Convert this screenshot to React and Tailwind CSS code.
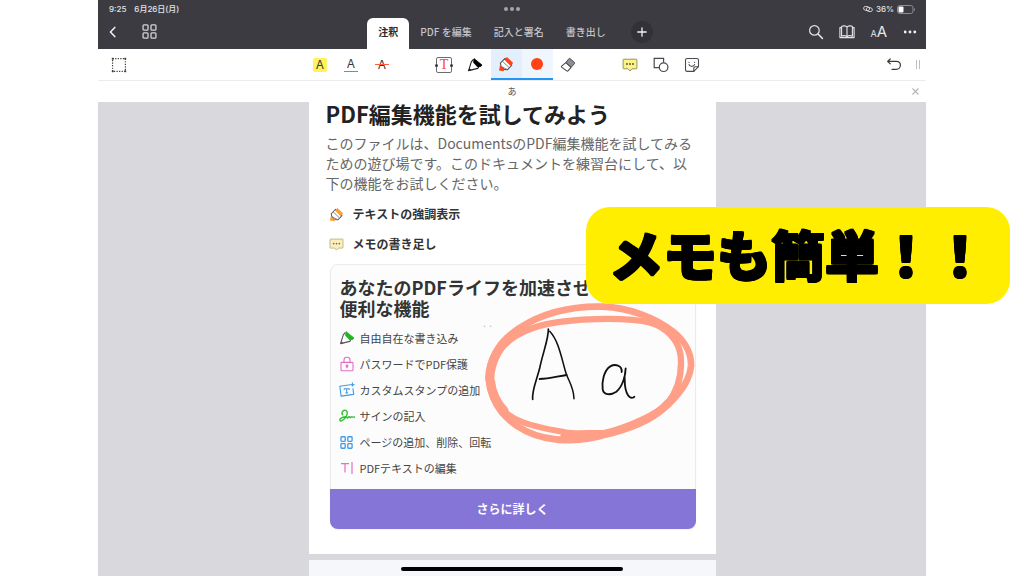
import { useState } from "react";

const TABS = ["注釈", "PDF を編集", "記入と署名", "書き出し"];

/* ---------- status bar + header icons ---------- */

function BackIcon() {
  return (
    <svg width="14" height="14" viewBox="0 0 14 14" fill="none" stroke="#f2f2f4" strokeWidth="1.5" strokeLinecap="round" strokeLinejoin="round">
      <path d="M8.8 2.4 4.4 7l4.4 4.6" />
    </svg>
  );
}

function GridIcon({ size, color, strokeWidth = 1.2 }) {
  return (
    <svg width={size} height={size} viewBox="0 0 14 14" fill="none" stroke={color} strokeWidth={strokeWidth}>
      <rect x="1" y="0.8" width="4.6" height="4.9" rx="0.8" />
      <rect x="8.4" y="0.8" width="4.6" height="4.9" rx="0.8" />
      <rect x="1" y="8.3" width="4.6" height="4.9" rx="0.8" />
      <rect x="8.4" y="8.3" width="4.6" height="4.9" rx="0.8" />
    </svg>
  );
}

function PlusIcon() {
  return (
    <svg width="10" height="10" viewBox="0 0 10 10" stroke="#f2f2f4" strokeWidth="1.3" strokeLinecap="round">
      <path d="M5 0.8v8.4M0.8 5h8.4" />
    </svg>
  );
}

function SearchIcon() {
  return (
    <svg width="16" height="16" viewBox="0 0 16 16" fill="none" stroke="#e4e4e7" strokeWidth="1.2" strokeLinecap="round">
      <circle cx="6.4" cy="6.4" r="4.8" />
      <path d="m10 10 4.4 4.4" strokeWidth="1.5" />
    </svg>
  );
}

function BookIcon() {
  return (
    <svg width="16" height="16" viewBox="0 0 16 16" fill="none" stroke="#e4e4e7" strokeWidth="1.1" strokeLinejoin="round">
      <path d="M8 3.2C6.8 1.6 4 1.5 2.6 2.4v9.8c1.6-.7 4.2-.6 5.4.6 1.2-1.2 3.8-1.3 5.4-.6V2.4C12 1.5 9.2 1.6 8 3.2Zm0 0v9.6" />
      <path d="M2.6 3.6H.9v10h14.2v-10h-1.7" />
    </svg>
  );
}

function MoreIcon() {
  return (
    <svg width="16" height="16" viewBox="0 0 16 16" fill="#f2f2f4">
      <circle cx="3.2" cy="8" r="1.4" />
      <circle cx="8" cy="8" r="1.4" />
      <circle cx="12.8" cy="8" r="1.4" />
    </svg>
  );
}

function HotspotIcon() {
  return (
    <svg width="10" height="8" viewBox="0 0 10 8" fill="none" stroke="#d4d4d8" strokeWidth="0.9">
      <rect x="0.6" y="1.6" width="6" height="3.8" rx="1.9" transform="rotate(12 3.6 3.5)" />
      <rect x="3.4" y="2.6" width="6" height="3.8" rx="1.9" transform="rotate(12 6.4 4.5)" />
    </svg>
  );
}

function BatteryIcon() {
  return (
    <svg width="18" height="9" viewBox="0 0 18 9">
      <rect x="0.5" y="0.5" width="15.5" height="8" rx="2.3" fill="none" stroke="#8f8e94" />
      <rect x="1.5" y="1.5" width="5" height="6" rx="1.1" fill="#fff" />
      <path d="M17 3v3c.6-.2.9-.8.9-1.5S17.6 3.2 17 3Z" fill="#8f8e94" />
    </svg>
  );
}

/* ---------- toolbar icons ---------- */

function SelectIcon() {
  return (
    <svg width="16" height="16" viewBox="0 0 16 16" fill="none" stroke="#3a3a3c" strokeWidth="1.2">
      <rect x="1.6" y="1.6" width="12.8" height="12.8" strokeDasharray="1.2 1.36" />
      <g fill="#3a3a3c" stroke="none">
        <rect x="0.8" y="0.8" width="1.8" height="1.8" />
        <rect x="13.4" y="0.8" width="1.8" height="1.8" />
        <rect x="0.8" y="13.4" width="1.8" height="1.8" />
        <rect x="13.4" y="13.4" width="1.8" height="1.8" />
      </g>
    </svg>
  );
}

function HighlighterIcon({ size = 16, color }) {
  return (
    <svg width={size} height={size} viewBox="0 0 16 16" strokeLinejoin="round" strokeLinecap="round">
      <path d="M7 2.4 2.4 7.2l.6 3.2 3.2 3 3.4.2 4.2-4.4Z" fill="#fff" stroke="#55555a" strokeWidth="1.1" />
      <path d="M9 1 15.2 7 12.4 9.800 6.400 3.800Z" fill={color} />
      <path d="m4.800 5.600 6 5.600M3 10.200 9 13.400" stroke="#77777c" strokeWidth="0.9" />
      <path d="M2 9.600 6.600 13.800 5.200 15.200 1 14.400Z" fill={color} />
    </svg>
  );
}

function PenIcon({ size = 16, stroke, fill }) {
  return (
    <svg width={size} height={size} viewBox="0 0 16 16" strokeLinejoin="round">
      <path d="M6.4 2.4 4.3 4.8 1.6 13.6l9.2-2.2 1.2-2.3" fill="#fff" stroke={stroke} strokeWidth="1.1" />
      <path d="M7 1.6 15 8l-1.2 1.4-3.2.5-4-4.3Z" fill={fill} stroke={fill} strokeWidth="0.8" />
      <path d="m1.4 13.9.9-3 2.3 2.3Z" fill={stroke} />
    </svg>
  );
}

function EraserIcon() {
  return (
    <svg width="16" height="16" viewBox="0 0 16 16" strokeLinejoin="round">
      <path d="m10 1.600 4.300 3.700c.5.4.5.900.1 1.400L11 10.400 5.800 5.600l3.100-3.900c.3-.4.700-.4 1.100-.1Z" fill="#8e8e93" stroke="#4a4a4e" strokeWidth="1" />
      <path d="m5.800 5.600 5.200 4.800-3 3.400c-.4.4-.8.400-1.300.1L1.900 10.400c-.5-.4-.6-.9-.2-1.300Z" fill="#fff" stroke="#4a4a4e" strokeWidth="1.1" />
    </svg>
  );
}

function NoteIcon({ size = 16, fill, stroke, dots }) {
  return (
    <svg width={size} height={size} viewBox="0 0 16 16" strokeLinejoin="round">
      <path d="M1.6 2.2h12.800c.3 0 .5.2.5.5v8.600c0 .3-.2.500-.5.500H10L8 14l-2-2.200H1.600c-.3 0-.5-.2-.5-.5V2.700c0-.3.200-.5.500-.5Z" fill={fill} stroke={stroke} strokeWidth="1" />
      <g fill={dots}>
        <circle cx="5" cy="7" r="0.9" />
        <circle cx="8" cy="7" r="0.9" />
        <circle cx="11" cy="7" r="0.9" />
      </g>
    </svg>
  );
}

function ShapesIcon() {
  return (
    <svg width="16" height="16" viewBox="0 0 16 16" fill="none" stroke="#4a4a4e" strokeWidth="1.2">
      <path d="M6 10.6H1.2V1.4h9.4v4" />
      <circle cx="10.6" cy="10.2" r="4.3" />
    </svg>
  );
}

function StickerIcon() {
  return (
    <svg width="16" height="16" viewBox="0 0 16 16" fill="none" stroke="#4a4a4e" strokeWidth="1.1" strokeLinejoin="round" strokeLinecap="round">
      <path d="M9.8 14.4H3.2c-1 0-1.700-.7-1.700-1.700V3.200c0-1 .7-1.700 1.700-1.700h9.600c1 0 1.700.7 1.700 1.700v6.500Z" />
      <path d="M9.8 14.4V11c0-.8.5-1.300 1.300-1.300h3.400" />
      <path d="M5 7.600c.6 2.200 4.600 2.400 5.600 0M5 5.200v.3M10.600 5.200v.3" />
    </svg>
  );
}

function UndoIcon() {
  return (
    <svg width="16" height="16" viewBox="0 0 16 16" fill="none" stroke="#3a3a3c" strokeWidth="1.2" strokeLinecap="round" strokeLinejoin="round">
      <path d="M4.200 2 1.600 4.400l2.600 2.400M1.800 4.400h8.400c2.500 0 4.200 1.700 4.200 3.900s-1.700 4.100-4.200 4.100H6" />
    </svg>
  );
}

function MarkedLetter({ kind }) {
  if (kind === "highlight") {
    return <span className="flex h-[14px] w-[14px] items-center justify-center rounded-xs bg-[#fff35c]">A</span>;
  }
  if (kind === "underline") {
    return <span className="flex h-[14px] w-[14px] items-center justify-center border-b border-[#ff5a3c]">A</span>;
  }
  return (
    <span className="relative flex h-[14px] w-[14px] items-center justify-center">
      A
      <span className="absolute inset-x-0 top-[6px] h-px bg-[#ff5a3c]" />
    </span>
  );
}

function TextBoxIcon() {
  return (
    <span className="relative flex h-4 w-4 items-center justify-center rounded-xs border border-[#6b6b70] font-['Liberation_Serif',serif] text-[14px] leading-none text-[#ff4a22]">
      T
      <span className="absolute top-[6px] -left-[2px] h-[3px] w-[3px] rounded-full bg-[#3a3a3c]" />
      <span className="absolute top-[6px] -right-[2px] h-[3px] w-[3px] rounded-full bg-[#3a3a3c]" />
    </span>
  );
}

function ToolButton({ label, className = "", children }) {
  return (
    <button
      type="button"
      aria-label={label}
      className={`flex h-[31px] w-[31px] flex-shrink-0 items-center justify-center text-[12px] leading-none text-[#3a3a3c] ${className}`}
    >
      {children}
    </button>
  );
}

/* ---------- feature list icons ---------- */

function LockIcon() {
  return (
    <svg width="14" height="16" viewBox="0 0 14 16" fill="none" stroke="#e36fc8" strokeWidth="1.1">
      <rect x="1" y="6.4" width="12" height="8.4" rx="0.8" />
      <path d="M4 6.4V4c0-3.600 6-3.600 6 0v2.400" />
      <circle cx="7" cy="10" r="0.9" fill="#e36fc8" />
      <path d="M7 10v2.2" />
    </svg>
  );
}

function StampIcon() {
  return (
    <svg width="16" height="16" viewBox="0 0 16 16" fill="none" stroke="#3d9be9" strokeWidth="1.1" strokeLinejoin="round">
      <path d="M11 2.700.8 4.200l1.300 9.900 12.600-1.700-.8-6.200" />
      <path d="M5.200 6.700h5v1.200M5.200 6.700v1.200M7.700 6.700v4.200M6.500 10.900h2.400" />
      <path d="M13.400.6v4M11.400 2.600h4" />
    </svg>
  );
}

function SignIcon() {
  return (
    <svg width="16" height="14" viewBox="0 0 16 14" fill="none" stroke="#2fc22f" strokeWidth="1.4" strokeLinecap="round" strokeLinejoin="round">
      <path d="M3.600 5.800C1.800 3.600 4.400.4 7 1.600c2.600 1.400.8 5.800-1.600 8.200-1.800 1.900-4.400 3-4.600 1.400C.6 9.600 4 8.200 6.600 7.800c1.600-.2 1 1.400 1.800 1.200.8-.2 1-1.600 1.800-1.400.6.200.4 1.200 1.200 1 .8-.2.800-1 1.400-.8.600.200 1.200.6 2.600.2" />
    </svg>
  );
}

function TextCursorIcon() {
  return (
    <svg width="14" height="14" viewBox="0 0 14 14" fill="none" stroke="#e36fc8" strokeWidth="1.2">
      <path d="M1 2.600h8M5 2.600v9M12 1v12" />
    </svg>
  );
}

const FEATURES = [
  { text: "自由自在な書き込み", icon: <PenIcon stroke="#55555a" fill="#22b422" /> },
  { text: "パスワードでPDF保護", icon: <LockIcon /> },
  { text: "カスタムスタンプの追加", icon: <StampIcon /> },
  { text: "サインの記入", icon: <SignIcon /> },
  { text: "ページの追加、削除、回転", icon: <GridIcon size={13} color="#3d9be9" strokeWidth={1.4} /> },
  { text: "PDFテキストの編集", icon: <TextCursorIcon /> },
];

// Freehand circle and "Aa" written over the card
function Handwriting() {
  return (
    <svg
      className="pointer-events-none absolute top-8 left-[148px]"
      width="220"
      height="150"
      viewBox="30 18 660 450"
      fill="none"
      strokeLinecap="round"
      strokeLinejoin="round"
    >
      <g stroke="#ff9f88">
        <path
          d="M60 265C60 200 95 150 150 112C220 66 310 45 400 47C480 50 560 80 612 122C645 148 668 185 666 225C662 265 640 295 612 326C570 376 500 398 420 428C370 444 310 451 260 445C170 436 100 385 75 325C66 303 60 288 60 265Z"
          strokeWidth="20"
        />
        <path
          d="M60 262C62 215 92 165 140 135C200 100 260 92 340 86C420 82 500 84 545 95C595 110 630 150 635 195C640 250 625 300 595 338C565 368 480 410 400 428"
          strokeWidth="19"
        />
        <path d="M62 262C64 208 92 160 130 132M64 270C68 310 82 335 105 360" strokeWidth="28" />
        <path d="M78 330C120 395 200 408 290 424C320 430 370 424 400 426" strokeWidth="18" />
        <path d="M286 437C330 434 370 438 430 424C500 405 560 380 598 335" strokeWidth="24" />
      </g>
      <g stroke="#111">
        <path d="M238 114C240 140 220 190 212 232C202 270 188 300 191 325" strokeWidth="5" />
        <path d="M242 121C270 150 278 205 292 250C302 275 314 290 315 323" strokeWidth="4.500" />
        <path d="M212 264C240 263 265 256 293 252" strokeWidth="5.500" />
        <path d="M458 243C460 222 438 218 424 226C404 238 398 275 401 295C404 312 424 314 442 302C462 286 470 250 470 232C464 262 466 305 482 318C488 322 494 320 496 317" strokeWidth="5.500" />
      </g>
      <g fill="#c8c8cc">
        <circle cx="47" cy="106" r="2.5" />
        <circle cx="65" cy="106" r="2.5" />
      </g>
    </svg>
  );
}

export default function App() {
  const [tab, setTab] = useState(TABS[0]);

  return (
    <div className="relative flex min-h-screen flex-col overflow-hidden bg-white px-[98px] font-['Noto_Sans_CJK_JP',sans-serif]">
      {/* Header */}
      <header className="bg-[#3c3b41] text-[#e4e4e7]">
        <div className="flex h-[18px] items-center px-[11px] font-['Inter','Noto_Sans_CJK_JP',sans-serif] text-[8px] leading-none font-medium">
          <div className="flex flex-1 gap-2">
            <span>9:25</span>
            <span>6月26日(月)</span>
          </div>
          <div className="flex gap-[2px]">
            <span className="h-1 w-1 rounded-full bg-[#a5a4aa]" />
            <span className="h-1 w-1 rounded-full bg-[#a5a4aa]" />
            <span className="h-1 w-1 rounded-full bg-[#a5a4aa]" />
          </div>
          <div className="flex flex-1 items-center justify-end gap-[3px]">
            <HotspotIcon />
            <span>36%</span>
            <BatteryIcon />
          </div>
        </div>

        <div className="flex h-[31px] px-2">
          <div className="flex flex-1 items-center gap-[22px] pb-1">
            <button type="button" aria-label="戻る"><BackIcon /></button>
            <button type="button" aria-label="サムネイル"><GridIcon size={15} color="#d4d4d8" /></button>
          </div>

          <nav className="flex pr-1">
            {TABS.map((t) => (
              <button
                key={t}
                type="button"
                onClick={() => setTab(t)}
                className={`rounded-t-md px-[11px] pb-1 text-[10px] whitespace-nowrap ${
                  t === tab ? "bg-white font-bold text-[#2b2b2e]" : "font-medium text-[#c4c3c9]"
                }`}
              >
                {t}
              </button>
            ))}
            <div className="flex items-center pb-1 pl-[14px]">
              <button type="button" aria-label="追加" className="flex h-[22px] w-[22px] items-center justify-center rounded-full bg-[#323136]">
                <PlusIcon />
              </button>
            </div>
          </nav>

          <div className="flex flex-1 items-center justify-end gap-[15px] pb-1">
            <button type="button" aria-label="検索"><SearchIcon /></button>
            <button type="button" aria-label="リーダー"><BookIcon /></button>
            <button type="button" aria-label="文字サイズ" className="flex items-baseline font-['Inter',sans-serif] leading-none">
              <span className="text-[9px]">A</span>
              <span className="text-[15px]">A</span>
            </button>
            <button type="button" aria-label="その他"><MoreIcon /></button>
          </div>
        </div>
      </header>

      {/* Annotation tools */}
      <div className="flex h-8 items-start border-b border-[#ececef] bg-white font-['Inter',sans-serif]">
        <div className="flex flex-1 pl-[5px]">
          <ToolButton label="選択"><SelectIcon /></ToolButton>
        </div>
        <div className="flex gap-[31px] pr-[11px]">
          <div className="flex">
            <ToolButton label="ハイライト"><MarkedLetter kind="highlight" /></ToolButton>
            <ToolButton label="下線"><MarkedLetter kind="underline" /></ToolButton>
            <ToolButton label="取り消し線"><MarkedLetter kind="strike" /></ToolButton>
          </div>
          <div className="flex">
            <ToolButton label="テキスト"><TextBoxIcon /></ToolButton>
            <ToolButton label="ペン"><PenIcon stroke="#222" fill="#000" /></ToolButton>
            <ToolButton label="マーカー" className="border-b-2 border-[#2196f3] bg-[#e3effd]">
              <HighlighterIcon color="#ff4316" />
            </ToolButton>
            <ToolButton label="色" className="border-b-2 border-[#2196f3] bg-[#f0f6fe]">
              <span className="h-3 w-3 rounded-full bg-[#ff4316]" />
            </ToolButton>
            <ToolButton label="消しゴム"><EraserIcon /></ToolButton>
          </div>
          <div className="flex">
            <ToolButton label="メモ"><NoteIcon fill="#fbf389" stroke="#9a945c" dots="#4a4a3c" /></ToolButton>
            <ToolButton label="図形"><ShapesIcon /></ToolButton>
            <ToolButton label="スタンプ"><StickerIcon /></ToolButton>
          </div>
        </div>
        <div className="flex flex-1 items-center justify-end gap-[7px] pr-[6px]">
          <ToolButton label="元に戻す"><UndoIcon /></ToolButton>
          <span className="flex h-[9px] w-1 border-x border-[#bdbdc2]" />
        </div>
      </div>

      {/* Document tab strip */}
      <div className="flex h-[21px] items-center bg-white px-[6px]">
        <span className="flex-1" />
        <span className="text-[9px] leading-none text-[#4a4a4e]">あ</span>
        <span className="flex flex-1 justify-end">
          <button type="button" aria-label="閉じる">
            <svg width="9" height="9" viewBox="0 0 9 9" stroke="#b4b4b8" strokeWidth="1.1">
              <path d="m1.500 1.500 6 6M7.500 1.500l-6 6" />
            </svg>
          </button>
        </span>
      </div>

      {/* Document */}
      <main className="flex flex-1 flex-col items-center gap-[6px] bg-[#d9d8dd]">
        <article className="w-full max-w-[407px] bg-white px-[17px] pb-[25px] text-[#333]">
          <h1 className="text-[22px] leading-[22px] font-bold text-[#222]">PDF編集機能を試してみよう</h1>
          <p className="mt-[9px] text-[14px] leading-5 text-[#666]">
            このファイルは、DocumentsのPDF編集機能を試してみるための遊び場です。このドキュメントを練習台にして、以下の機能をお試しください。
          </p>
          <ul className="mt-[11px] space-y-[10px] text-[12px] leading-5 font-bold">
            <li className="flex items-center gap-[9px] pl-[3px]">
              <HighlighterIcon size={15} color="#ff9f2e" />
              テキストの強調表示
            </li>
            <li className="flex items-center gap-[9px] pl-[3px]">
              <NoteIcon size={15} fill="#fbf0bd" stroke="#bdb58c" dots="#6e6a55" />
              メモの書き足し
            </li>
          </ul>

          <section className="relative mt-[10px] mr-[3px] ml-1 rounded-lg border border-[#ebebee] bg-[#fcfcfc] shadow-xs">
            <h2 className="pt-3 pr-20 pl-[9px] text-[18px] leading-[21px] font-bold">
              あなたのPDFライフを加速させる便利な機能
            </h2>
            <ul className="mt-[6px] px-2 text-[11px] leading-[26px] text-[#444]">
              {FEATURES.map((f) => (
                <li key={f.text} className="flex items-center gap-[5px]">
                  <span className="flex w-4 justify-center">{f.icon}</span>
                  {f.text}
                </li>
              ))}
            </ul>
            <a
              href="#more"
              className="mt-2 -mx-px -mb-px flex h-10 items-center justify-center rounded-b-lg bg-[#8475d6] text-[12px] font-bold text-white"
            >
              さらに詳しく
            </a>
            <Handwriting />
          </section>
        </article>

        <div className="flex w-full max-w-[407px] flex-1 justify-center bg-[#f6f7fa] pt-[7px] pb-[5px]">
          <span className="h-1 w-[222px] rounded-full bg-black" />
        </div>
      </main>

      {/* Caption banner */}
      <div className="absolute top-[207px] right-[14px] rounded-3xl bg-[#ffee00] px-[23px] pt-3 pb-4">
        <p className="text-[54px] leading-[69px] font-black whitespace-nowrap text-black [text-shadow:1px_0_black,-1px_0_black,0_1px_black,0_-1px_black,1px_1px_black,-1px_-1px_black,1px_-1px_black,-1px_1px_black]">
          メモも簡単！！
        </p>
      </div>
    </div>
  );
}
